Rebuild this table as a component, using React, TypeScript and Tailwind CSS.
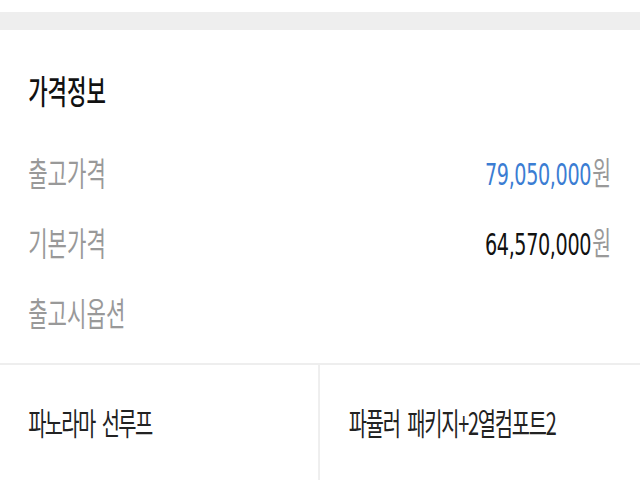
import React from "react";

const KR = "font-['Noto_Sans_CJK_KR','Noto_Sans',sans-serif]";

function Value({ amount, color }: { amount: string; color: string }) {
  return (
    <div className="flex items-baseline whitespace-nowrap">
      <span className={`text-[30px] leading-none tracking-[-0.6px] font-['DejaVu_Sans',sans-serif] ${color}`}>
        {amount}
      </span>
      <span className={`ml-[2px] text-[32px] leading-none text-[#999999] ${KR}`}>원</span>
    </div>
  );
}

export default function App() {
  return (
    <div className="h-[480px] w-[640px] overflow-hidden bg-white">
      <div className={`flex h-[480px] w-[1000px] origin-top-left scale-x-[0.64] flex-col ${KR}`}>
        <div className="h-[12px]" />
        <div className="h-[18px] bg-[#eeeeee]" />
        <div className="flex flex-col pl-[44px] pr-[45px] pt-[40px]">
          <div className="flex h-[40px] items-center">
            <span className="text-[33px] font-medium leading-none text-[#111111]">가격정보</span>
          </div>
          <div className="mt-[27px] flex h-[70px] items-center justify-between">
            <span className="text-[33px] leading-none text-[#999999]">출고가격</span>
            <Value amount="79,050,000" color="text-[#3b7dd3]" />
          </div>
          <div className="flex h-[70px] items-center justify-between">
            <span className="text-[33px] leading-none text-[#999999]">기본가격</span>
            <Value amount="64,570,000" color="text-[#111111]" />
          </div>
          <div className="flex h-[70px] items-center justify-between">
            <span className="text-[33px] leading-none text-[#999999]">출고시옵션</span>
          </div>
        </div>
        <div className="mt-[16px] h-[2px] bg-[#eeeeee]" />
        <div className="grid flex-1 grid-cols-2">
          <div className="border-r-[3px] border-[#eeeeee] pl-[44px] pt-[36px]">
            <div className="flex h-[40px] items-center">
              <span className="whitespace-nowrap text-[31px] leading-none tracking-[-2.6px] [word-spacing:7px] text-[#222222]">
                파노라마 선루프
              </span>
            </div>
          </div>
          <div className="pl-[45px] pt-[36px]">
            <div className="flex h-[40px] items-center">
              <span className="whitespace-nowrap text-[31px] leading-none tracking-[-2px] [word-spacing:7px] text-[#222222]">
                파퓰러 패키지+2열컴포트2
              </span>
            </div>
          </div>
        </div>
      </div>
    </div>
  );
}
